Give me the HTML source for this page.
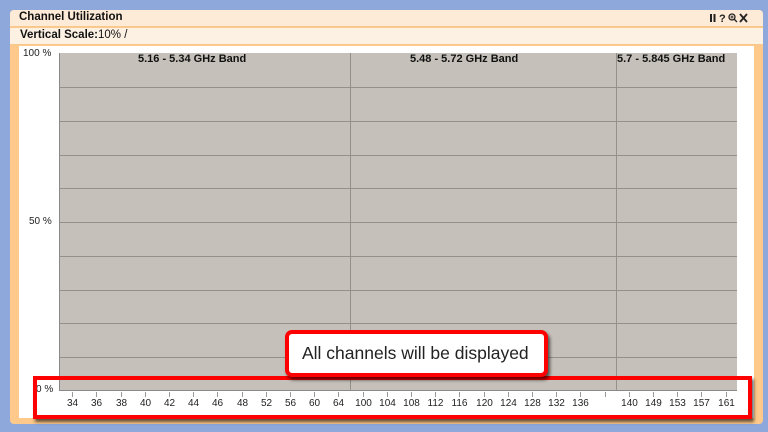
<!DOCTYPE html>
<html><head><style>
*{margin:0;padding:0;box-sizing:border-box}
body{width:768px;height:432px;background:#8ea8dc;position:relative;overflow:hidden;font-family:"Liberation Sans",Arial,sans-serif}
.abs{position:absolute}
</style></head><body>
<div class="abs" style="left:10px;top:10px;width:753px;height:414px;background:#fec98a;border-radius:4px"></div>
<div class="abs" style="left:10px;top:10px;width:753px;height:17px;background:#fdebd7;border-bottom:1px solid #f6c88c;border-radius:4px 4px 0 0"></div>
<div class="abs" style="left:19px;top:11px;font-size:11.5px;font-weight:bold;color:#111">Channel Utilization</div>
<svg class="abs" style="left:708px;top:12px" width="44" height="12">
<g fill="#222"><rect x="2" y="2" width="2" height="8"/><rect x="5.5" y="2" width="2" height="8"/></g>
<text x="11" y="10" font-size="11" font-weight="bold" fill="#222" font-family="Liberation Sans">?</text>
<g stroke="#222" stroke-width="1.3" fill="none"><circle cx="24" cy="5" r="3"/><line x1="26" y1="7" x2="29" y2="10"/><line x1="22.5" y1="5" x2="25.5" y2="5" stroke-width="1"/><line x1="24" y1="3.5" x2="24" y2="6.5" stroke-width="1"/>
<path d="M32 2 L39 10 M39 2 L32 10" stroke-width="1.8"/></g>
</svg>
<div class="abs" style="left:10px;top:28px;width:753px;height:17px;background:#fdf1e4;border-bottom:1px solid #f6c88c"></div>
<div class="abs" style="left:20px;top:29px;font-size:11.5px;color:#111"><b>Vertical Scale:</b>10% /</div>
<div class="abs" style="left:19px;top:46px;width:735px;height:372px;background:#fff"></div>
<div class="abs" style="left:59px;top:53px;width:678px;height:338px;background:#c5c0b9;border-left:1px solid #888;border-bottom:1px solid #888"></div>
<svg class="abs" style="left:0;top:0" width="768" height="432">
<g stroke="#959089" stroke-width="1">
<line x1="59" y1="87.5" x2="737" y2="87.5"/><line x1="59" y1="121.5" x2="737" y2="121.5"/><line x1="59" y1="155.5" x2="737" y2="155.5"/><line x1="59" y1="188.5" x2="737" y2="188.5"/><line x1="59" y1="222.5" x2="737" y2="222.5"/><line x1="59" y1="256.5" x2="737" y2="256.5"/><line x1="59" y1="290.5" x2="737" y2="290.5"/><line x1="59" y1="323.5" x2="737" y2="323.5"/><line x1="59" y1="357.5" x2="737" y2="357.5"/>
<line x1="350.5" y1="53" x2="350.5" y2="391"/><line x1="616.5" y1="53" x2="616.5" y2="391"/>
</g>
<g stroke="#999" id="ticks"></g>
</svg>
<div class="abs" style="left:23px;top:48px;font-size:10px;color:#222">100 %</div>
<div class="abs" style="left:29px;top:216px;font-size:10px;color:#222">50 %</div>
<div class="abs" style="left:36px;top:384px;font-size:10px;color:#222">0 %</div>
<div class="abs" style="left:138px;top:53px;font-size:11px;font-weight:bold;color:#111">5.16 - 5.34 GHz Band</div>
<div class="abs" style="left:410px;top:53px;font-size:11px;font-weight:bold;color:#111">5.48 - 5.72 GHz Band</div>
<div class="abs" style="left:617px;top:53px;font-size:11px;font-weight:bold;color:#111">5.7 - 5.845 GHz Band</div>
<div id="labels"></div>
<div class="abs" style="left:33px;top:376px;width:719px;height:43px;border:4px solid #f00;box-shadow:2px 3px 3px rgba(0,0,0,.6)"></div>
<div class="abs" style="left:285px;top:330px;width:263px;height:47px;border:4px solid #f00;border-radius:7px;background:#fff;box-shadow:2px 3px 3px rgba(0,0,0,.6);font-size:17.5px;color:#222;padding-left:13px;line-height:39px">All channels will be displayed</div>
<script>
var L=["34","36","38","40","42","44","46","48","52","56","60","64","100","104","108","112","116","120","124","128","132","136","","140","149","153","157","161"];
var g=document.getElementById("ticks"),h="",d="";
for(var i=0;i<28;i++){var x=Math.round(59+24.2*i+12.1)+1.5;h+='<line x1="'+x+'" y1="392" x2="'+x+'" y2="397"/>';
if(L[i])d+='<div class="abs" style="left:'+(x-20)+'px;top:398px;width:40px;text-align:center;font-size:10px;color:#222">'+L[i]+'</div>';}
g.innerHTML=h;document.getElementById("labels").innerHTML=d;
</script>
</body></html>
